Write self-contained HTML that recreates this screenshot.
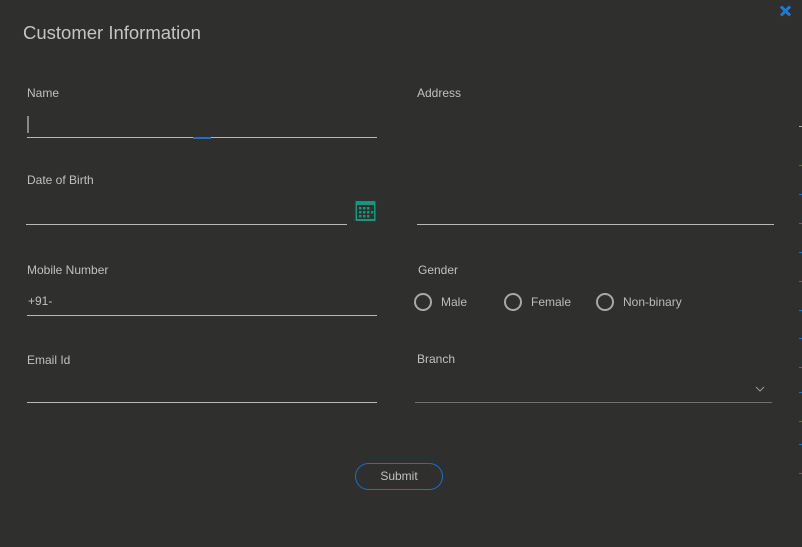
<!DOCTYPE html>
<html><head><style>
body{margin:0;width:802px;height:547px;background:#2f2f2d;font-family:"Liberation Sans",sans-serif;color:#c8c8c8;position:relative;overflow:hidden}
.a{position:absolute}
.lbl{font-size:12px;color:#c0c0c0}
.line{height:1px;background:#b8b8b8}
.r{width:18px;height:18px;border:2px solid #a8a8a8;border-radius:50%;box-sizing:border-box}
.rt{font-size:12px;color:#bcbcbc}
.bl{position:absolute;left:799px;width:3px;height:1px;background:#1e6fc8}
</style></head><body>
<div class="a" style="left:23px;top:22px;font-size:18.5px;color:#c4c4c4">Customer Information</div>
<svg class="a" style="left:779px;top:5px" width="13" height="12" viewBox="0 0 13 12"><path d="M2 1.5L11 10.5M11 1.5L2 10.5" stroke="#1f78d8" stroke-width="3"/></svg>

<div class="a lbl" style="left:27px;top:86px">Name</div>
<div class="a" style="left:27px;top:116px;width:2px;height:17px;background:#888"></div>
<div class="a line" style="left:27px;top:137px;width:350px"></div>
<div class="a" style="left:193px;top:137px;width:18px;height:2px;background:#1e6fc8"></div>

<div class="a lbl" style="left:27px;top:173px">Date of Birth</div>
<div class="a line" style="left:26px;top:224px;width:321px"></div>
<svg class="a" style="left:355px;top:200px" width="21" height="21" viewBox="0 0 21 21"><rect x="0.5" y="1" width="20" height="20" fill="#0f9980"/><rect x="2" y="5" width="17" height="14" fill="#2f2f2d"/><g fill="#0f9980"><rect x="4" y="7" width="2.5" height="2.5"/><rect x="8" y="7" width="2.5" height="2.5"/><rect x="12" y="7" width="2.5" height="2.5"/><rect x="4" y="11" width="2.5" height="2.5"/><rect x="8" y="11" width="2.5" height="2.5"/><rect x="12" y="11" width="2.5" height="2.5"/><rect x="4" y="15" width="2.5" height="2.5"/><rect x="8" y="15" width="2.5" height="2.5"/><rect x="12" y="15" width="2.5" height="2.5"/><rect x="16" y="11" width="2" height="2.5"/></g></svg>

<div class="a lbl" style="left:27px;top:263px">Mobile Number</div>
<div class="a lbl" style="left:28px;top:294px">+91-</div>
<div class="a line" style="left:27px;top:315px;width:350px"></div>

<div class="a lbl" style="left:27px;top:353px">Email Id</div>
<div class="a line" style="left:27px;top:402px;width:350px"></div>

<div class="a lbl" style="left:417px;top:86px">Address</div>
<div class="a line" style="left:417px;top:224px;width:357px"></div>

<div class="a lbl" style="left:418px;top:263px">Gender</div>
<div class="a r" style="left:414px;top:293px"></div><div class="a rt" style="left:441px;top:295px">Male</div>
<div class="a r" style="left:504px;top:293px"></div><div class="a rt" style="left:531px;top:295px">Female</div>
<div class="a r" style="left:596px;top:293px"></div><div class="a rt" style="left:623px;top:295px">Non-binary</div>

<div class="a lbl" style="left:417px;top:352px">Branch</div>
<svg class="a" style="left:755px;top:386px" width="10" height="6" viewBox="0 0 10 6"><path d="M1 1L5 5L9 1" stroke="#999" fill="none" stroke-width="1"/></svg>
<div class="a" style="left:415px;top:402px;width:357px;height:1px;background:#707070"></div>

<div class="a" style="left:355px;top:463px;width:88px;height:27px;border:1px solid #1e6fc8;border-radius:14px;box-sizing:border-box;text-align:center;line-height:25px;font-size:12px;color:#c0c0c0">Submit</div>

<div class="bl" style="top:126px;background:#aaa"></div>
<div class="bl" style="top:165px"></div><div class="bl" style="top:194px"></div>
<div class="bl" style="top:223px"></div><div class="bl" style="top:252px"></div>
<div class="bl" style="top:281px"></div><div class="bl" style="top:310px"></div>
<div class="bl" style="top:338px"></div><div class="bl" style="top:367px"></div>
<div class="bl" style="top:392px"></div><div class="bl" style="top:421px"></div>
<div class="bl" style="top:444px"></div><div class="bl" style="top:473px"></div>
</body></html>
